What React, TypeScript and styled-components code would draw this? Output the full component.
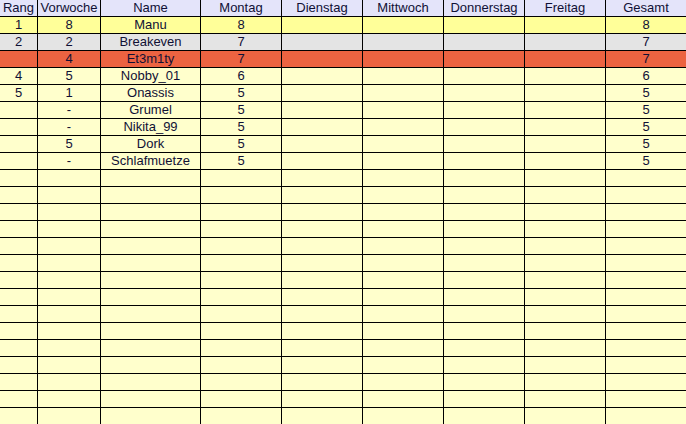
import React from "react";
import styled, { createGlobalStyle } from "styled-components";

const Global = createGlobalStyle`
  html, body { margin: 0; padding: 0; background: #ffffcc; overflow: hidden; }
  body { font-family: "Liberation Sans", Arial, sans-serif; }
`;

type Variant = "head" | "first" | "second" | "third" | "plain";

const bg: Record<Variant, string> = {
  head: "#e4e4fa",
  first: "#ffff99",
  second: "#e4e4e4",
  third: "#ec6341",
  plain: "#ffffcc",
};

const Sheet = styled.div`
  width: 687px;
  display: flex;
  flex-direction: column;
`;

const Row = styled.div<{ $variant: Variant }>`
  display: grid;
  grid-template-columns: 38px 63px 100px 81px 81px 81px 81px 81px 81px;
  background: ${(p) => bg[p.$variant]};
`;

const Cell = styled.div`
  box-sizing: border-box;
  height: 17px;
  border-right: 1px solid #000;
  border-bottom: 1px solid #000;
  font-size: 13px;
  line-height: 16px;
  color: #101035;
  text-align: center;
  white-space: nowrap;
  overflow: hidden;
`;

const headers = ["Rang", "Vorwoche", "Name", "Montag", "Dienstag", "Mittwoch", "Donnerstag", "Freitag", "Gesamt"];

const data: { v: Variant; c: string[] }[] = [
  { v: "first", c: ["1", "8", "Manu", "8", "", "", "", "", "8"] },
  { v: "second", c: ["2", "2", "Breakeven", "7", "", "", "", "", "7"] },
  { v: "third", c: ["", "4", "Et3m1ty", "7", "", "", "", "", "7"] },
  { v: "plain", c: ["4", "5", "Nobby_01", "6", "", "", "", "", "6"] },
  { v: "plain", c: ["5", "1", "Onassis", "5", "", "", "", "", "5"] },
  { v: "plain", c: ["", "-", "Grumel", "5", "", "", "", "", "5"] },
  { v: "plain", c: ["", "-", "Nikita_99", "5", "", "", "", "", "5"] },
  { v: "plain", c: ["", "5", "Dork", "5", "", "", "", "", "5"] },
  { v: "plain", c: ["", "-", "Schlafmuetze", "5", "", "", "", "", "5"] },
];

const emptyRows = Array.from({ length: 16 }, () => ({ v: "plain" as Variant, c: Array(9).fill("") }));

export default function App() {
  const rows = [...data, ...emptyRows];
  return (
    <>
      <Global />
      <Sheet>
        <Row $variant="head">
          {headers.map((h) => (
            <Cell key={h}>{h}</Cell>
          ))}
        </Row>
        {rows.map((r, i) => (
          <Row key={i} $variant={r.v}>
            {r.c.map((c, j) => (
              <Cell key={j}>{c}</Cell>
            ))}
          </Row>
        ))}
      </Sheet>
    </>
  );
}
